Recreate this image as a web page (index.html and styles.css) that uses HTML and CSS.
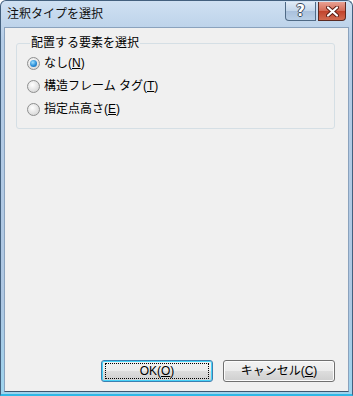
FILE: index.html
```html
<!DOCTYPE html>
<html lang="ja">
<head>
  <meta charset="UTF-8"/>
  <title>注釈タイプを選択</title>
  <link rel="stylesheet" href="styles.css">
</head>
<body>
  <div class="window">
    <div class="titlebar">
      <span class="title">注釈タイプを選択</span>
      <div class="caps">
        <span class="cap help">?</span>
        <span class="cap close">
          <svg width="13" height="11" viewBox="0 0 13 11"><path d="M2 1.5 L11 9.5 M11 1.5 L2 9.5" stroke="#5a1a12" stroke-width="4" stroke-linecap="round"/><path d="M2 1.5 L11 9.5 M11 1.5 L2 9.5" stroke="#fff" stroke-width="2.2" stroke-linecap="round"/></svg>
        </span>
      </div>
    </div>
    <div class="client">
      <fieldset class="group">
        <legend>配置する要素を選択</legend>
        <label class="opt"><span class="radio on"></span><span>なし(<u>N</u>)</span></label>
        <label class="opt"><span class="radio"></span><span>構造フレーム タグ(<u>T</u>)</span></label>
        <label class="opt"><span class="radio"></span><span>指定点高さ(<u>E</u>)</span></label>
      </fieldset>
      <div class="actions">
        <button class="btn default"><span class="focus">OK(<u>O</u>)</span></button>
        <button class="btn"><span>キャンセル(<u>C</u>)</span></button>
      </div>
    </div>
  </div>
</body>
</html>
```
FILE: styles.css
```css
html,body{margin:0;width:353px;height:396px;overflow:hidden;background:#fff;}
body{font-family:"Liberation Sans","Noto Sans CJK JP",sans-serif;color:#000;}
.window{
  box-sizing:border-box;width:353px;height:396px;
  display:flex;flex-direction:column;
  border:1px solid #43607e;border-bottom:2px solid #2fb8e6;border-radius:6px 6px 0 0;
  background:linear-gradient(#cfe0f2,#b4cce6 40px,#aec7e2 300px,#9ed4ee);
  padding:0 3px 2px 3px;
}
.titlebar{height:26px;display:flex;align-items:flex-start;justify-content:space-between;}
.title{font-size:12px;line-height:14px;margin:6px 0 0 3px;color:#111;}
.caps{display:flex;gap:2px;margin:1px 3px 0 0;}
.cap{
  box-sizing:border-box;height:19px;display:flex;align-items:center;justify-content:center;
  border:1px solid #4f6a86;border-top:none;
}
.help{
  width:31px;border-radius:0 0 0 4px;background:linear-gradient(#e0ebf6,#c2d5ea 50%,#a9c0dc 51%,#b9cfe6);
  font-family:"DejaVu Sans",sans-serif;font-weight:bold;font-size:15px;line-height:15px;color:#fff;
  text-shadow:1px 0 0 #3a4a5c,-1px 0 0 #3a4a5c,0 1px 0 #3a4a5c,0 -1px 0 #3a4a5c;
}
.close{width:28px;border-color:#5a2a22;border-radius:0 0 4px 0;background:linear-gradient(#e8a092,#d46a56 50%,#c1432c 51%,#d26a50);}
.client{
  flex:1;display:flex;flex-direction:column;background:#f0f0f0;
  border:1px solid #8aa2bd;border-bottom-color:#3d5670;
  padding:0 13px 0 11px;
}
.group{
  margin:8px 0 0 0;padding:5px 0 10px 10px;
  border:1px solid #d5dfe5;border-radius:3px;
  display:flex;flex-direction:column;gap:6px;
}
.group legend{font-size:12px;line-height:14px;padding:0 1px;margin-left:3px;}
.opt{display:flex;align-items:center;gap:4px;font-size:12px;line-height:17px;}
.opt u,.btn u{text-decoration-thickness:1px;text-underline-offset:1px;}
.radio{
  box-sizing:border-box;width:13px;height:13px;border-radius:50%;
  border:1px solid #8e8f8f;background:radial-gradient(circle at 40% 35%,#fff,#dcdcdc 70%,#cfcfcf);
  display:flex;align-items:center;justify-content:center;
}
.radio.on::after{
  content:"";width:7px;height:7px;border-radius:50%;
  background:radial-gradient(circle at 40% 35%,#9fe0ff,#2a8ed8 55%,#0b5fa8);
}
.actions{margin-top:auto;margin-bottom:9px;display:flex;justify-content:flex-end;gap:10px;}
.btn{
  box-sizing:border-box;width:112px;height:22px;margin:0;padding:0;
  font-family:inherit;font-size:12px;line-height:14px;color:#000;
  border:1px solid #707070;border-radius:3px;
  background:linear-gradient(#f2f2f2,#ebebeb 50%,#dddddd 51%,#cfcfcf);
  box-shadow:inset 0 0 0 1px #fcfcfc;
  display:flex;align-items:center;justify-content:center;
}
.btn.default{border-color:#3c7fb1;box-shadow:inset 0 0 0 1px #48d3f8;}
.focus{
  box-sizing:border-box;width:104px;height:16px;border:1px dotted #000;
  display:flex;align-items:center;justify-content:center;
}
```
